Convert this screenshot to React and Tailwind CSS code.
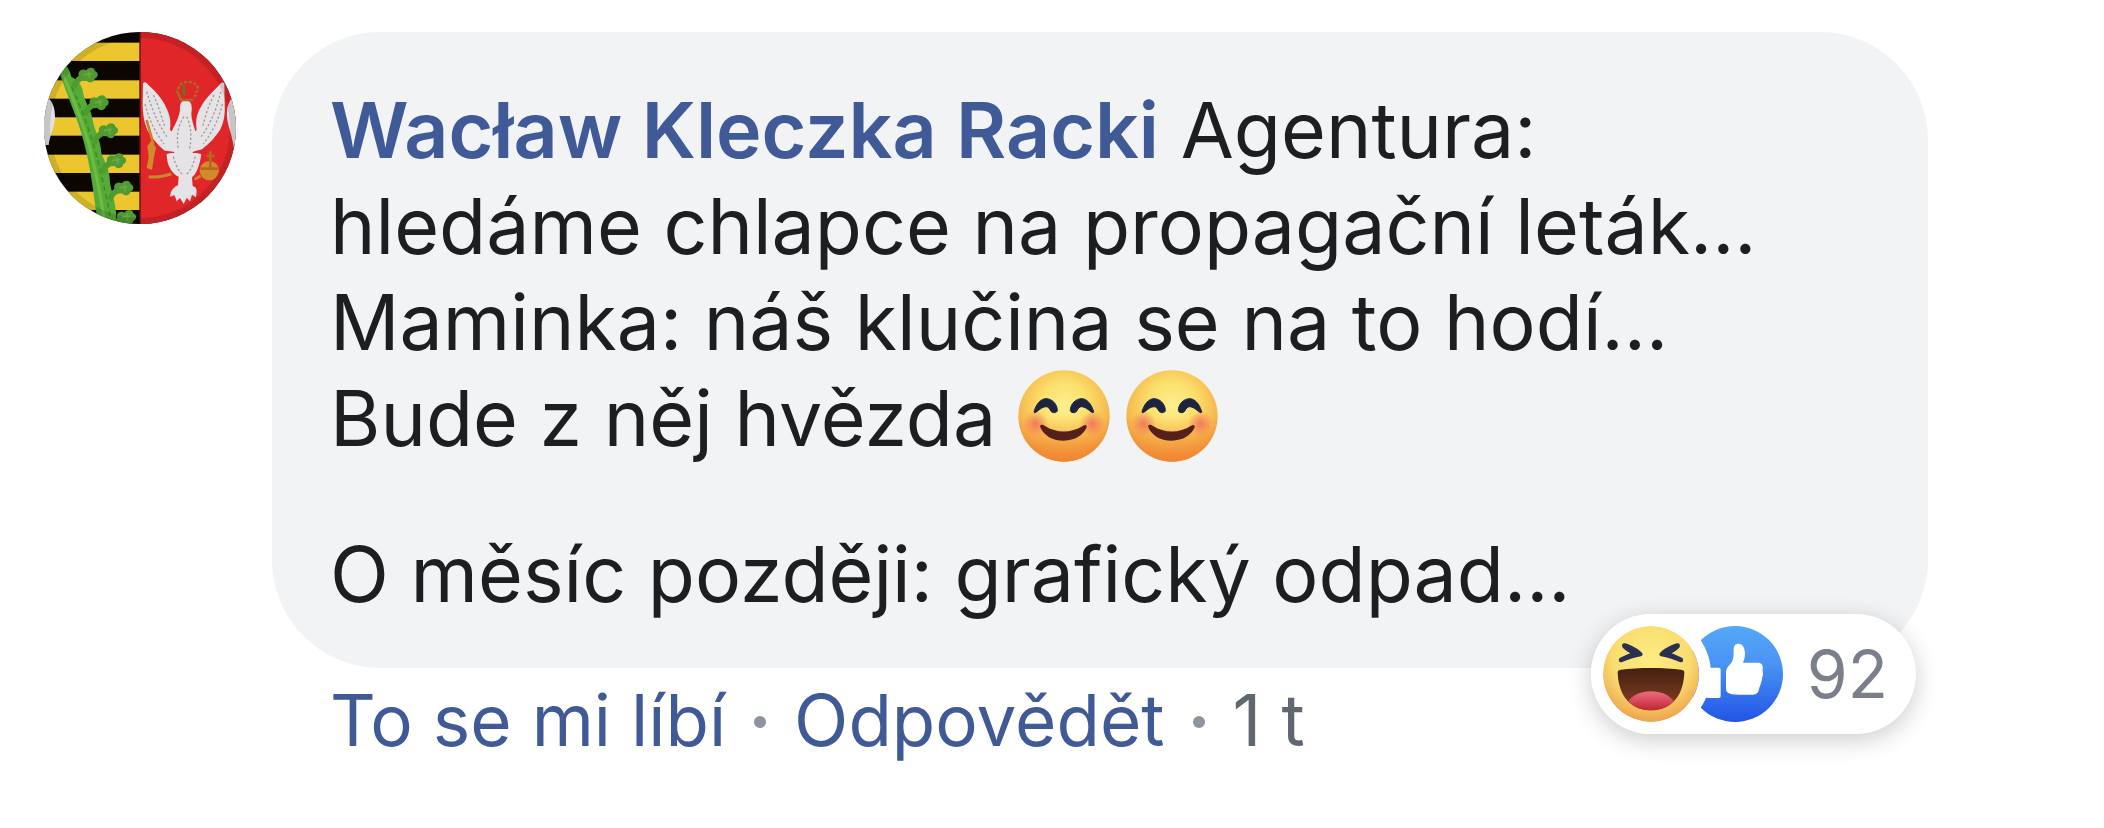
import React from 'react';

const BlushEmoji = () => (
    <svg viewBox="55 59 276 276" role="img" aria-label="😊" className="w-[92px] h-[92px]">
        <defs>
            <radialGradient id="blushFace" cx="193" cy="165" r="160" gradientUnits="userSpaceOnUse">
                <stop offset="0" stopColor="#fdf08e" />
                <stop offset="0.45" stopColor="#fbdf6c" />
                <stop offset="0.85" stopColor="#f6b84c" />
                <stop offset="1" stopColor="#f3a042" />
            </radialGradient>
            <linearGradient id="blushShade" x1="0" y1="0" x2="0" y2="1">
                <stop offset="0.5" stopColor="#f28a3a" stopOpacity="0" />
                <stop offset="1" stopColor="#f0812f" stopOpacity="0.85" />
            </linearGradient>
            <radialGradient id="blushCheek">
                <stop offset="0" stopColor="#f2765c" stopOpacity="0.95" />
                <stop offset="1" stopColor="#f2765c" stopOpacity="0" />
            </radialGradient>
        </defs>
        <circle cx="193" cy="197" r="137" fill="url(#blushFace)" />
        <circle cx="193" cy="197" r="137" fill="url(#blushShade)" />
        <circle cx="108" cy="220" r="38" fill="url(#blushCheek)" />
        <circle cx="278" cy="220" r="38" fill="url(#blushCheek)" />
        <g fill="#1c2440" stroke="#1c2440" strokeWidth="3">
            <path d="M103 184 C110 160 124 145 139 145 C156 145 173 160 173 181 C171 188 160 189 154 183 C150 174 145 169 139 169 C130 169 121 176 110 185 C106 188 103 188 103 184 Z" />
            <path d="M282 184 C275 160 261 145 246 145 C229 145 212 160 212 181 C214 188 225 189 231 183 C235 174 240 169 246 169 C255 169 264 176 275 185 C279 188 282 188 282 184 Z" />
        </g>
        <path d="M121 229 C122 222 130 222 136 227 C170 249 215 249 249 227 C256 222 262 223 261 231 C252 254 226 271 192 271 C156 271 132 254 121 229 Z" fill="#56201a" />
    </svg>
);

const HahaIcon = () => (
    <svg viewBox="132 108 288 288" aria-hidden="true" className="relative w-24 h-24 rounded-full ring-12 ring-white">
        <defs>
            <radialGradient id="hahaFace" cx="276" cy="205" r="195" gradientUnits="userSpaceOnUse">
                <stop offset="0" stopColor="#fdec82" />
                <stop offset="0.6" stopColor="#f9dc70" />
                <stop offset="1" stopColor="#eda04b" />
            </radialGradient>
            <linearGradient id="hahaMouth" x1="0" y1="0" x2="0" y2="1">
                <stop offset="0" stopColor="#432013" />
                <stop offset="1" stopColor="#8a401f" />
            </linearGradient>
            <linearGradient id="hahaTongue" x1="0" y1="0" x2="0" y2="1">
                <stop offset="0" stopColor="#ee6b80" />
                <stop offset="1" stopColor="#c02634" />
            </linearGradient>
        </defs>
        <circle cx="276" cy="252" r="144" fill="url(#hahaFace)" />
        <path d="M176 250 C175 243 178 240 186 239 C235 232 317 232 366 239 C374 240 377 243 376 250 C373 318 337 361 276 361 C215 361 179 318 176 250 Z" fill="url(#hahaMouth)" />
        <path d="M208 333 C222 315 246 304 276 304 C306 304 330 315 344 333 C328 352 305 361 276 361 C247 361 224 352 208 333 Z" fill="url(#hahaTongue)" />
        <path d="M198 160 C218 166 240 178 250 190 C252 194 250 198 246 199 C228 202 208 208 188 217 C178 217 178 209 182 204 C192 199 204 194 214 190 C205 185 196 179 190 172 C188 164 190 159 198 160 Z" fill="#2a3050" />
        <path d="M354 160 C334 166 312 178 302 190 C300 194 302 198 306 199 C324 202 344 208 364 217 C374 217 374 209 370 204 C360 199 348 194 338 190 C347 185 356 179 362 172 C364 164 362 159 354 160 Z" fill="#2a3050" />
    </svg>
);

const LikeIcon = () => (
    <svg viewBox="384 108 288 288" aria-hidden="true" className="w-24 h-24 -ml-3">
        <defs>
            <linearGradient id="likeFill" x1="0" y1="0" x2="0" y2="1">
                <stop offset="0" stopColor="#55a8f8" />
                <stop offset="0.4" stopColor="#4a93f4" />
                <stop offset="1" stopColor="#2154e6" />
            </linearGradient>
        </defs>
        <circle cx="528" cy="252" r="144" fill="url(#likeFill)" />
        <rect x="440" y="233" width="45" height="91" rx="6" fill="#fff" />
        <path d="M501 248 C501 236 508 229 516 220 C524 210 524 196 524 180 C524 167 529 161 538 161 C552 161 558 176 558 192 C558 204 554 211 552 218 L596 218 C608 218 613 226 611 236 C610 242 612 246 612 252 C612 258 609 262 609 267 C609 273 606 277 605 282 C604 288 601 291 600 298 C598 309 592 314 582 314 L540 314 C524 314 512 313 505 307 C502 304 501 300 501 295 Z" fill="#fff" />
    </svg>
);

const Avatar = () => (
    <svg viewBox="42 36 576 576" role="img" aria-label="Wacław Kleczka Racki" className="w-48 h-48 shrink-0 rounded-full">
        <rect x="42" y="36" width="576" height="576" fill="#0b0600" />
        {[68, 181, 292, 404, 515].map((y) => (
            <rect key={y} x="42" y={y} width="290" height="55" fill="#ecc62e" />
        ))}
        <rect x="330" y="36" width="288" height="576" fill="#e02629" />
        <path d="M330 36 V612" stroke="#5c0d08" strokeWidth="4" />

        {/* rue branch */}
        <path d="M80 130 C100 122 118 140 124 170 C140 178 158 194 160 222 C166 250 184 268 188 300 C196 340 212 360 214 400 C226 430 240 450 240 490 C248 530 262 560 258 612 L206 612 C194 560 190 500 178 440 C166 370 146 310 122 250 C108 210 94 180 80 130 Z" fill="#55ab35" />
        <path d="M100 165 C130 240 165 320 184 400 C200 470 216 540 224 612" fill="none" stroke="#6cbc46" strokeWidth="9" />
        <path d="M125 200 C155 270 180 330 200 410 C218 480 232 540 242 600" fill="none" stroke="#3f8f28" strokeWidth="5" strokeDasharray="16 10" />
        {[[175, 165], [208, 248], [236, 332], [260, 422], [282, 504], [290, 592]].map(([x, y]) => (
            <g key={y} transform={`translate(${x} ${y})`} fill="#4f9a32">
                <path d="M-50 30 C-34 -2 -16 -8 2 -2 L-2 16 C-18 12 -28 22 -38 42 Z" />
                <path d="M-28 4 C-34 -10 -20 -22 -6 -14 C-2 -24 18 -26 20 -12 C32 -8 30 8 20 10 C18 22 4 28 -6 16 C-16 18 -26 14 -28 4 Z" />
                <path d="M-14 0 L10 -4 M0 -10 L4 10" stroke="#67ac46" strokeWidth="5" />
            </g>
        ))}

        {/* eagle */}
        <g fill="#e6e3e6">
            <path d="M339 190 C345 184 350 188 356 196 C380 218 396 236 408 262 C418 282 424 300 420 330 L440 345 L432 395 L404 392 C385 376 366 356 352 330 C344 310 338 285 338 250 Z" />
            <path d="M583 190 C577 184 571 190 565 198 C543 220 526 236 512 262 C500 282 496 300 500 330 L482 345 L488 395 L516 388 C537 372 556 352 570 330 C582 308 586 282 584 250 Z" />
            <path d="M450 270 C448 246 460 238 472 242 C484 244 488 258 484 280 C484 308 500 330 500 362 C498 384 490 396 482 406 L438 406 C426 390 420 374 420 352 C424 326 446 304 450 270 Z" />
            <path d="M410 402 C430 396 490 396 514 402 C510 432 500 462 486 472 L488 498 C504 502 500 516 498 532 L486 524 L480 544 L470 534 L461 552 L450 534 L440 544 L434 526 L420 530 C422 512 430 502 444 496 L446 470 C426 462 410 436 410 402 Z" />
        </g>
        <g fill="none" stroke="#a39a9f" strokeWidth="4" strokeDasharray="7 6">
            <path d="M350 215 C364 262 380 304 410 350" />
            <path d="M345 252 C358 302 376 336 402 372" />
            <path d="M370 225 C388 262 394 292 404 318" />
            <path d="M573 215 C560 262 546 304 514 350" />
            <path d="M577 252 C566 302 546 336 520 372" />
            <path d="M552 225 C532 262 526 292 518 318" />
            <path d="M462 290 C442 320 438 350 446 390" />
            <path d="M470 290 C484 320 486 350 478 390" />
            <path d="M430 410 C438 440 448 455 456 462" />
            <path d="M496 410 C488 440 480 455 470 462" />
        </g>
        <g fill="none" stroke="#a96a25" strokeWidth="8">
            <path d="M444 208 C450 190 462 186 474 186 C488 186 500 192 504 204 L494 232" strokeDasharray="9 5" />
            <path d="M440 212 L454 240 L490 240" />
            <path d="M462 196 V226" stroke="#5c7a2c" />
            <path d="M350 300 L370 372" stroke="#c8822b" />
        </g>
        <path d="M352 378 L364 362 L378 382 L372 412 L366 450 L350 444 L356 412 Z" fill="#cf8b2c" />
        <path d="M356 470 C380 474 398 470 424 462" fill="none" stroke="#c98730" strokeWidth="9" />
        <circle cx="538" cy="452" r="29" fill="#d08c2a" />
        <path d="M511 446 H566 M541 392 V446 M530 408 H554" stroke="#b5691f" strokeWidth="8" />
        <path d="M512 468 L494 478" stroke="#c98730" strokeWidth="8" />

        {/* light edges of the shield and the thin inner border */}
        <path d="M42 225 C70 240 76 265 75 300 C70 330 60 345 56 375 L42 375 Z" fill="#e4e1e4" />
        <path d="M618 225 C594 240 588 265 592 300 C598 330 606 345 612 385 L618 385 Z" fill="#e4e1e4" />
        <circle cx="330" cy="324" r="279" fill="none" stroke="#000" strokeOpacity="0.12" strokeWidth="18" />
    </svg>
);

const App = () => {
    return (
        <main className="min-h-screen bg-white pt-8 pl-11 pr-44 flex items-start gap-9 font-['Inter',sans-serif] text-[#1c1e21]">
            <Avatar />

            <div className="flex-1">
                <article className="relative bg-[#f1f3f5] rounded-[108px] px-[58px] pt-[50px] pb-[46px] text-[77px] leading-[96px]">
                    <p>
                        <a href="#profile" className="font-semibold text-[#3f5a96]">Wacław Kleczka Racki</a> Agentura:<br />
                        hledáme chlapce na propagační leták...<br />
                        Maminka: náš klučina se na to hodí...<br />
                        Bude z něj hvězda <span className="inline-flex gap-4 h-[92px] align-[-16px]"><BlushEmoji /><BlushEmoji /></span>
                    </p>
                    <p className="mt-[60px]">O měsíc později: grafický odpad...</p>

                    <button
                        type="button"
                        className="absolute right-3 -bottom-[66px] h-[120px] pl-3 pr-7 flex items-center bg-white rounded-full shadow-[0_6px_24px_rgba(0,0,0,0.2)] text-[66px] text-[#7b7f8a]"
                    >
                        <HahaIcon />
                        <LikeIcon />
                        <span className="ml-6">92</span>
                    </button>
                </article>

                <div className="mt-1 pl-[58px] flex gap-7 text-[71px] leading-[96px] text-[#616770]">
                    <button type="button" className="text-[#3f5a96]">To se mi líbí</button>
                    <span className="w-3 h-3 mt-1 rounded-full bg-[#8d949e] self-center" />
                    <button type="button" className="text-[#3f5a96]">Odpovědět</button>
                    <span className="w-3 h-3 mt-1 rounded-full bg-[#8d949e] self-center" />
                    <time>1 t</time>
                </div>
            </div>
        </main>
    );
};

export default App;
